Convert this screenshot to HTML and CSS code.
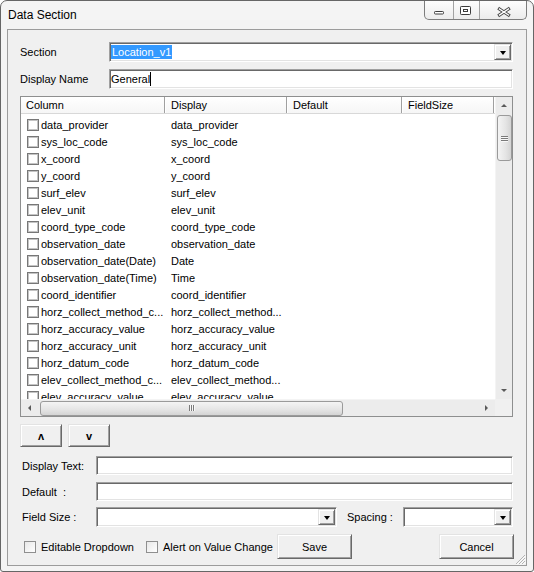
FILE: index.html
```html
<!DOCTYPE html>
<html>
<head>
<meta charset="utf-8">
<title>Data Section</title>
<link rel="stylesheet" href="styles.css">
</head>
<body>
<div class="window">
  <div class="titlebar">
    <span class="title">Data Section</span>
    <div class="caption-buttons">
      <span class="cb cb-min"><svg width="28" height="18" viewBox="0 0 28 18"><rect x="9.5" y="10.5" width="9" height="2.5" rx="0.8" fill="#fff" stroke="#3c3c3c" stroke-width="1"/></svg></span>
      <span class="cb cb-max"><svg width="25" height="18" viewBox="0 0 25 18"><rect x="6.5" y="5.5" width="10" height="8" rx="0.8" fill="#fff" stroke="#3c3c3c" stroke-width="1"/><rect x="9.5" y="8.5" width="4" height="2" fill="#fff" stroke="#3c3c3c" stroke-width="1"/></svg></span>
      <span class="cb cb-close"><svg width="46" height="18" viewBox="0 0 46 18"><path d="M19.5 8 L28.5 14 M28.5 8 L19.5 14" stroke="#4a4a4a" stroke-width="3.2" stroke-linecap="square" fill="none"/><path d="M19.5 8 L28.5 14 M28.5 8 L19.5 14" stroke="#fff" stroke-width="1.3" stroke-linecap="square" fill="none"/></svg></span>
    </div>
  </div>

  <div class="client">
    <div class="field-row first-row">
      <span class="lbl lbl-top">Section</span>
      <div class="combo sunken grow">
        <span class="sel">Location_v1</span>
        <span class="dd raised"><i class="tri"></i></span>
      </div>
    </div>
    <div class="field-row row-gap">
      <span class="lbl lbl-top">Display Name</span>
      <div class="textbox sunken grow tall"><span class="val">General</span><span class="caret"></span></div>
    </div>

    <div class="listview">
      <div class="lv-main">
        <div class="lv-header">
          <span class="hc c1">Column</span>
          <span class="hc c2">Display</span>
          <span class="hc c3">Default</span>
          <span class="hc c4">FieldSize</span>
        </div>
        <div class="lv-rows">
          <div class="lv-row"><span class="rc c1"><i class="chk"></i>data_provider</span><span class="rc c2">data_provider</span></div>
          <div class="lv-row"><span class="rc c1"><i class="chk"></i>sys_loc_code</span><span class="rc c2">sys_loc_code</span></div>
          <div class="lv-row"><span class="rc c1"><i class="chk"></i>x_coord</span><span class="rc c2">x_coord</span></div>
          <div class="lv-row"><span class="rc c1"><i class="chk"></i>y_coord</span><span class="rc c2">y_coord</span></div>
          <div class="lv-row"><span class="rc c1"><i class="chk"></i>surf_elev</span><span class="rc c2">surf_elev</span></div>
          <div class="lv-row"><span class="rc c1"><i class="chk"></i>elev_unit</span><span class="rc c2">elev_unit</span></div>
          <div class="lv-row"><span class="rc c1"><i class="chk"></i>coord_type_code</span><span class="rc c2">coord_type_code</span></div>
          <div class="lv-row"><span class="rc c1"><i class="chk"></i>observation_date</span><span class="rc c2">observation_date</span></div>
          <div class="lv-row"><span class="rc c1"><i class="chk"></i>observation_date(Date)</span><span class="rc c2">Date</span></div>
          <div class="lv-row"><span class="rc c1"><i class="chk"></i>observation_date(Time)</span><span class="rc c2">Time</span></div>
          <div class="lv-row"><span class="rc c1"><i class="chk"></i>coord_identifier</span><span class="rc c2">coord_identifier</span></div>
          <div class="lv-row"><span class="rc c1"><i class="chk"></i>horz_collect_method_c...</span><span class="rc c2">horz_collect_method...</span></div>
          <div class="lv-row"><span class="rc c1"><i class="chk"></i>horz_accuracy_value</span><span class="rc c2">horz_accuracy_value</span></div>
          <div class="lv-row"><span class="rc c1"><i class="chk"></i>horz_accuracy_unit</span><span class="rc c2">horz_accuracy_unit</span></div>
          <div class="lv-row"><span class="rc c1"><i class="chk"></i>horz_datum_code</span><span class="rc c2">horz_datum_code</span></div>
          <div class="lv-row"><span class="rc c1"><i class="chk"></i>elev_collect_method_c...</span><span class="rc c2">elev_collect_method...</span></div>
          <div class="lv-row"><span class="rc c1"><i class="chk"></i>elev_accuracy_value</span><span class="rc c2">elev_accuracy_value</span></div>
        </div>
      </div>
      <div class="vscroll">
        <span class="sb-arrow"><i class="tri-up"></i></span>
        <span class="vthumb"><i class="grip-h"></i><i class="grip-h"></i><i class="grip-h"></i></span>
        <span class="sb-fill"></span>
        <span class="sb-arrow"><i class="tri-down"></i></span>
      </div>
      <div class="hscroll">
        <span class="sb-arrow-h"><i class="tri-left"></i></span>
        <span class="hthumb"><i class="grip-v"></i><i class="grip-v"></i><i class="grip-v"></i></span>
        <span class="sb-fill"></span>
        <span class="sb-arrow-h"><i class="tri-right"></i></span>
      </div>
      <div class="corner"></div>
    </div>

    <div class="move-row">
      <button class="btn raised move">ʌ</button>
      <button class="btn raised move">v</button>
    </div>

    <div class="field-row gap-9">
      <span class="lbl lbl-bot">Display Text:</span>
      <div class="textbox sunken grow"></div>
    </div>
    <div class="field-row gap-7">
      <span class="lbl lbl-bot">Default&nbsp; :</span>
      <div class="textbox sunken grow"></div>
    </div>
    <div class="field-row gap-6">
      <span class="lbl lbl-bot">Field Size :</span>
      <div class="combo sunken size-combo">
        <span class="dd raised"><i class="tri"></i></span>
      </div>
      <span class="lbl lbl-spacing">Spacing :</span>
      <div class="combo sunken grow">
        <span class="dd raised"><i class="tri"></i></span>
      </div>
    </div>
    <div class="action-row">
      <span class="chk-item item-1"><i class="chk2"></i>Editable Dropdown</span>
      <span class="chk-item item-2"><i class="chk2"></i>Alert on Value Change</span>
      <button class="btn raised action">Save</button>
      <button class="btn raised action cancel">Cancel</button>
    </div>

    <svg class="grip" width="12" height="12" viewBox="0 0 12 12">
      <path d="M11 2 L2 11 M11 5 L5 11 M11 8 L8 11" stroke="#b4b4b4" stroke-width="1" fill="none"/>
      <path d="M11.8 2.8 L2.8 11.8 M11.8 5.8 L5.8 11.8 M11.8 8.8 L8.8 11.8" stroke="#ffffff" stroke-width="1" fill="none"/>
    </svg>
  </div>
</div>
</body>
</html>
```

FILE: styles.css
```css
* { box-sizing: border-box; }

html, body {
  margin: 0;
  padding: 0;
}

body {
  width: 534px;
  height: 572px;
  overflow: hidden;
  background: #ffffff;
  font-family: "Liberation Sans", Arial, sans-serif;
  font-size: 11px;
  color: #000;
}

.window {
  width: 534px;
  height: 572px;
  border: 1px solid #666;
  border-radius: 7px 7px 3px 3px;
  background: #f4f4f4;
  display: flex;
  flex-direction: column;
  overflow: hidden;
}

/* ---------- title bar ---------- */
.titlebar {
  flex: none;
  height: 28px;
  display: flex;
  align-items: flex-start;
}

.title {
  font-size: 12px;
  line-height: 15px;
  padding: 7px 0 0 7px;
  color: #000;
}

.caption-buttons {
  margin-left: auto;
  margin-right: 6px;
  display: flex;
  height: 19px;
  border: 1px solid #7c7c7c;
  border-top: none;
  border-radius: 0 0 5px 5px;
  background: linear-gradient(#fdfdfd, #ececec);
  overflow: hidden;
}

.cb {
  display: block;
  height: 18px;
}

.cb svg { display: block; }

.cb + .cb { border-left: 1px solid #a2a2a2; }

.cb-min { width: 28px; }
.cb-max { width: 26px; }
.cb-close { width: 47px; }

/* ---------- client ---------- */
.client {
  flex: 1;
  margin: 0 6px 5px 6px;
  border: 1px solid #9c9c9c;
  background: #f0f0f0;
  padding: 12px 13px 0 12px;
  display: flex;
  flex-direction: column;
  position: relative;
}

.field-row {
  display: flex;
  align-items: center;
  flex: none;
}

.row-gap { margin-top: 7px; }
.gap-9 { margin-top: 9px; }
.gap-7 { margin-top: 7px; }
.gap-6 { margin-top: 6px; }

.lbl { white-space: nowrap; }
.lbl-top { width: 89px; }
.lbl-bot { width: 76px; padding-left: 2px; }
.lbl-spacing { width: 56px; margin-left: 10px; }

.grow { flex: 1; }

.sunken {
  background: #fff;
  border: 1px solid;
  border-color: #a0a0a0 #ffffff #ffffff #a0a0a0;
  box-shadow: inset 1px 1px 0 #696969, inset -1px -1px 0 #e3e3e3;
}

.raised {
  background: #f0f0f0;
  border: 1px solid;
  border-color: #e3e3e3 #696969 #696969 #e3e3e3;
  box-shadow: inset 1px 1px 0 #ffffff, inset -1px -1px 0 #a0a0a0;
}

.textbox {
  height: 19px;
  display: flex;
  align-items: center;
  padding-left: 1px;
}

.textbox.tall { height: 20px; }

.val { line-height: 14px; }

.caret {
  width: 1px;
  height: 14px;
  background: #000;
}

.combo {
  height: 20px;
  display: flex;
  align-items: center;
  padding: 1px 1px 1px 1px;
}

.size-combo { width: 241px; flex: none; }

.sel {
  background: #3399ff;
  color: #fff;
  line-height: 14px;
  padding: 0 1px;
}

.dd {
  margin-left: auto;
  width: 17px;
  height: 16px;
  display: flex;
  align-items: center;
  justify-content: center;
  padding-top: 1px;
}

.tri {
  display: block;
  width: 0;
  height: 0;
  border-left: 3.5px solid transparent;
  border-right: 3.5px solid transparent;
  border-top: 4px solid #000;
}

/* ---------- list view ---------- */
.listview {
  flex: none;
  margin-top: 7px;
  height: 321px;
  border: 1px solid #8e8f8f;
  background: #fff;
  display: grid;
  grid-template-columns: 474px 17px;
  grid-template-rows: 302px 17px;
}

.lv-main {
  grid-row: 1;
  grid-column: 1;
  overflow: hidden;
}

.lv-header {
  display: flex;
  height: 17px;
  background: linear-gradient(#ffffff, #f6f6f6);
  border-bottom: 1px solid #d8d8d8;
}

.hc {
  display: block;
  line-height: 16px;
  padding-left: 5px;
  box-shadow: inset -1px 0 0 #ffffff, inset -2px 0 0 #a0a0a0;
  white-space: nowrap;
}

.c1 { width: 145px; flex: none; }
.c2 { width: 122px; flex: none; }
.c3 { width: 115px; flex: none; }
.c4 { width: 92px; flex: none; }

.lv-rows { padding-top: 2px; }

.lv-row {
  display: flex;
  height: 17px;
  align-items: center;
}

.rc {
  display: flex;
  align-items: center;
  white-space: nowrap;
  overflow: hidden;
  padding-left: 5px;
}

.rc.c1 { padding-left: 6px; }

.chk {
  display: block;
  flex: none;
  width: 12px;
  height: 12px;
  margin-right: 2px;
  border: 1px solid #777;
  box-shadow: inset 0 0 0 1px #c4c4c4;
  background: #fff;
}

/* scrollbars */
.vscroll {
  grid-row: 1;
  grid-column: 2;
  background: #ececec;
  border-left: 1px solid #f4f4f4;
  display: flex;
  flex-direction: column;
  align-items: center;
}

.sb-arrow {
  flex: none;
  width: 16px;
  height: 17px;
  display: flex;
  align-items: center;
  justify-content: center;
}

.sb-fill { flex: 1; }

.tri-up, .tri-down, .tri-left, .tri-right {
  display: block;
  width: 0;
  height: 0;
}

.tri-up {
  border-left: 3.5px solid transparent;
  border-right: 3.5px solid transparent;
  border-bottom: 3px solid #5a5a5a;
}

.tri-down {
  border-left: 3.5px solid transparent;
  border-right: 3.5px solid transparent;
  border-top: 3px solid #5a5a5a;
}

.tri-left {
  border-top: 3.5px solid transparent;
  border-bottom: 3.5px solid transparent;
  border-right: 3px solid #5a5a5a;
}

.tri-right {
  border-top: 3.5px solid transparent;
  border-bottom: 3.5px solid transparent;
  border-left: 3px solid #5a5a5a;
}

.vthumb {
  flex: none;
  width: 15px;
  height: 46px;
  margin-top: 1px;
  border: 1px solid #9a9a9a;
  border-radius: 3px;
  background: linear-gradient(to right, #f4f4f4, #e4e4e4 60%, #d4d4d4);
  display: flex;
  flex-direction: column;
  align-items: center;
  justify-content: center;
  gap: 1px;
}

.grip-h {
  display: block;
  width: 7px;
  height: 1px;
  background: #7a7a7a;
  box-shadow: 0 1px 0 #f8f8f8;
}

.hscroll {
  grid-row: 2;
  grid-column: 1;
  background: #ececec;
  border-top: 1px solid #f4f4f4;
  display: flex;
  align-items: center;
}

.sb-arrow-h {
  flex: none;
  width: 17px;
  height: 16px;
  display: flex;
  align-items: center;
  justify-content: center;
}

.hthumb {
  flex: none;
  width: 303px;
  height: 15px;
  margin-left: 2px;
  border: 1px solid #9a9a9a;
  border-radius: 3px;
  background: linear-gradient(#f4f4f4, #e4e4e4 60%, #d4d4d4);
  display: flex;
  align-items: center;
  justify-content: center;
  gap: 1px;
}

.grip-v {
  display: block;
  width: 1px;
  height: 6px;
  background: #7a7a7a;
  box-shadow: 1px 0 0 #f8f8f8;
}

.corner {
  grid-row: 2;
  grid-column: 2;
  background: #f0f0f0;
}

/* ---------- buttons ---------- */
.btn {
  font-family: "Liberation Sans", Arial, sans-serif;
  font-size: 11px;
  color: #000;
  padding: 0;
  margin: 0;
  display: flex;
  align-items: center;
  justify-content: center;
}

.move-row {
  flex: none;
  display: flex;
  gap: 6px;
  margin-top: 7px;
}

.move {
  width: 42px;
  height: 23px;
  font-weight: bold;
  font-size: 11px;
}

.action-row {
  flex: none;
  display: flex;
  align-items: center;
  margin-top: 7px;
}

.chk-item {
  display: flex;
  align-items: center;
  white-space: nowrap;
}

.item-1 { width: 122px; margin-left: 4px; }
.item-2 { width: 131px; }

.chk2 {
  display: block;
  flex: none;
  width: 12px;
  height: 12px;
  margin-right: 5px;
  border: 1px solid #8f8f8f;
  background: linear-gradient(135deg, #e8e8e8, #ffffff);
}

.action {
  width: 75px;
  height: 25px;
}

.cancel {
  margin-left: auto;
  margin-right: -1px;
}

.grip {
  position: absolute;
  right: 0;
  bottom: 0;
  display: block;
}
```
